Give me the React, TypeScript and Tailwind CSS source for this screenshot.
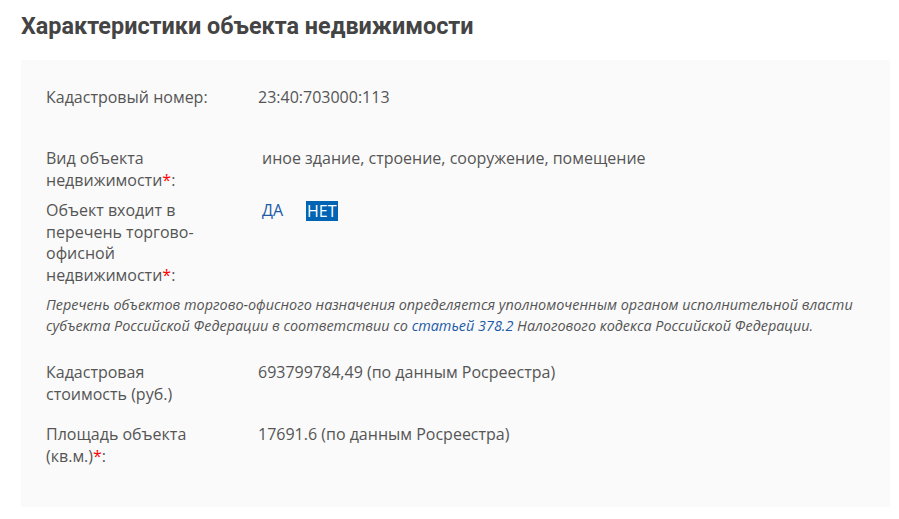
import React from "react";

const Star = () => <span className="text-[#ff0000]">*</span>;

export default function App() {
  return (
    <div className="w-[899px] h-[519px] bg-white text-[#555] [font-family:'Open_Sans',sans-serif]">
      <div className="pt-[8px] pl-[21px] pr-[9px]">
        <h1 className="text-[23.4px] leading-[36px] font-bold text-[#444] [font-family:'Roboto',sans-serif]">
          Характеристики объекта недвижимости
        </h1>
        <div className="mt-[16px] bg-[#fafafa] pl-[25px] pr-[25px] pt-[26px] pb-[40px] text-[16px] leading-[22px]">
          <div className="flex">
            <div className="w-[212px] shrink-0 pr-[42px]">Кадастровый номер:</div>
            <div>23:40:703000:113</div>
          </div>
          <div className="flex mt-[39px]">
            <div className="w-[212px] shrink-0 pr-[42px]">
              Вид объекта недвижимости<Star />:
            </div>
            <div className="pl-[4px]">иное здание, строение, сооружение, помещение</div>
          </div>
          <div className="flex mt-[9px] leading-[21.7px]">
            <div className="w-[212px] shrink-0 pr-[42px]">
              Объект входит в перечень торгово-офисной недвижимости<Star />:
            </div>
            <div className="pl-[4px] flex items-start gap-[23px] text-[#1a5aa8]">
              <span>ДА</span>
              <span className="bg-[#0064b4] text-white px-[1px] leading-[20px] mt-[1px]">НЕТ</span>
            </div>
          </div>
          <p className="mt-[7px] italic text-[14.4px] leading-[21px] text-[#555]">
            Перечень объектов торгово-офисного назначения определяется уполномоченным органом исполнительной власти субъекта Российской Федерации в соответствии со{" "}
            <span className="text-[#1a5aa8]">статьей 378.2</span> Налогового кодекса Российской Федерации.
          </p>
          <div className="flex mt-[25px]">
            <div className="w-[212px] shrink-0 pr-[42px]">Кадастровая стоимость (руб.)</div>
            <div>693799784,49 (по данным Росреестра)</div>
          </div>
          <div className="flex mt-[18px]">
            <div className="w-[212px] shrink-0 pr-[42px]">
              Площадь объекта (кв.м.)<Star />:
            </div>
            <div>17691.6 (по данным Росреестра)</div>
          </div>
        </div>
      </div>
    </div>
  );
}
